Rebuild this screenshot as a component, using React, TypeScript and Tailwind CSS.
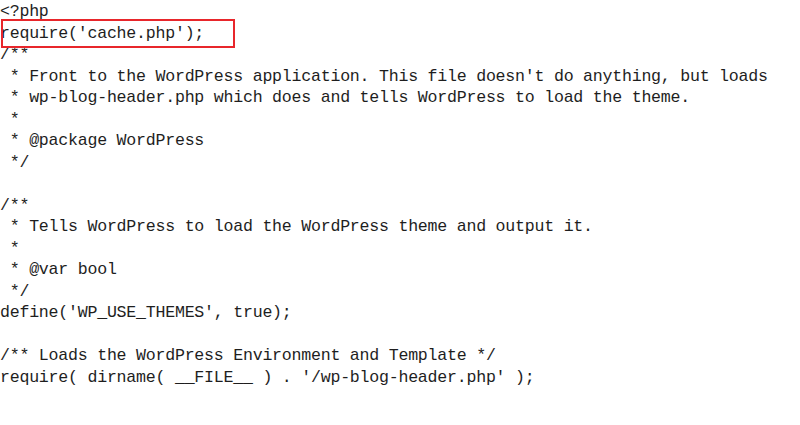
const lines = [
  "<?php",
  "require('cache.php');",
  "/**",
  " * Front to the WordPress application. This file doesn't do anything, but loads",
  " * wp-blog-header.php which does and tells WordPress to load the theme.",
  " *",
  " * @package WordPress",
  " */",
  "",
  "/**",
  " * Tells WordPress to load the WordPress theme and output it.",
  " *",
  " * @var bool",
  " */",
  "define('WP_USE_THEMES', true);",
  "",
  "/** Loads the WordPress Environment and Template */",
  "require( dirname( __FILE__ ) . '/wp-blog-header.php' );",
];

export default function App() {
  return (
    <div className="relative w-[800px] h-[425px] overflow-hidden bg-white">
      <pre className="font-['Liberation_Mono',monospace] text-[16.6px] tracking-[-0.24px] leading-[21.5px] text-[#1e1e1e] m-0 mt-px">
        {lines.map((line, i) => (
          <div key={i} className="h-[21.5px] whitespace-pre">
            {line}
          </div>
        ))}
      </pre>
      <div className="absolute left-[1px] top-[19px] w-[234px] h-[29px] border-2 border-[#e8262b]" />
    </div>
  );
}
